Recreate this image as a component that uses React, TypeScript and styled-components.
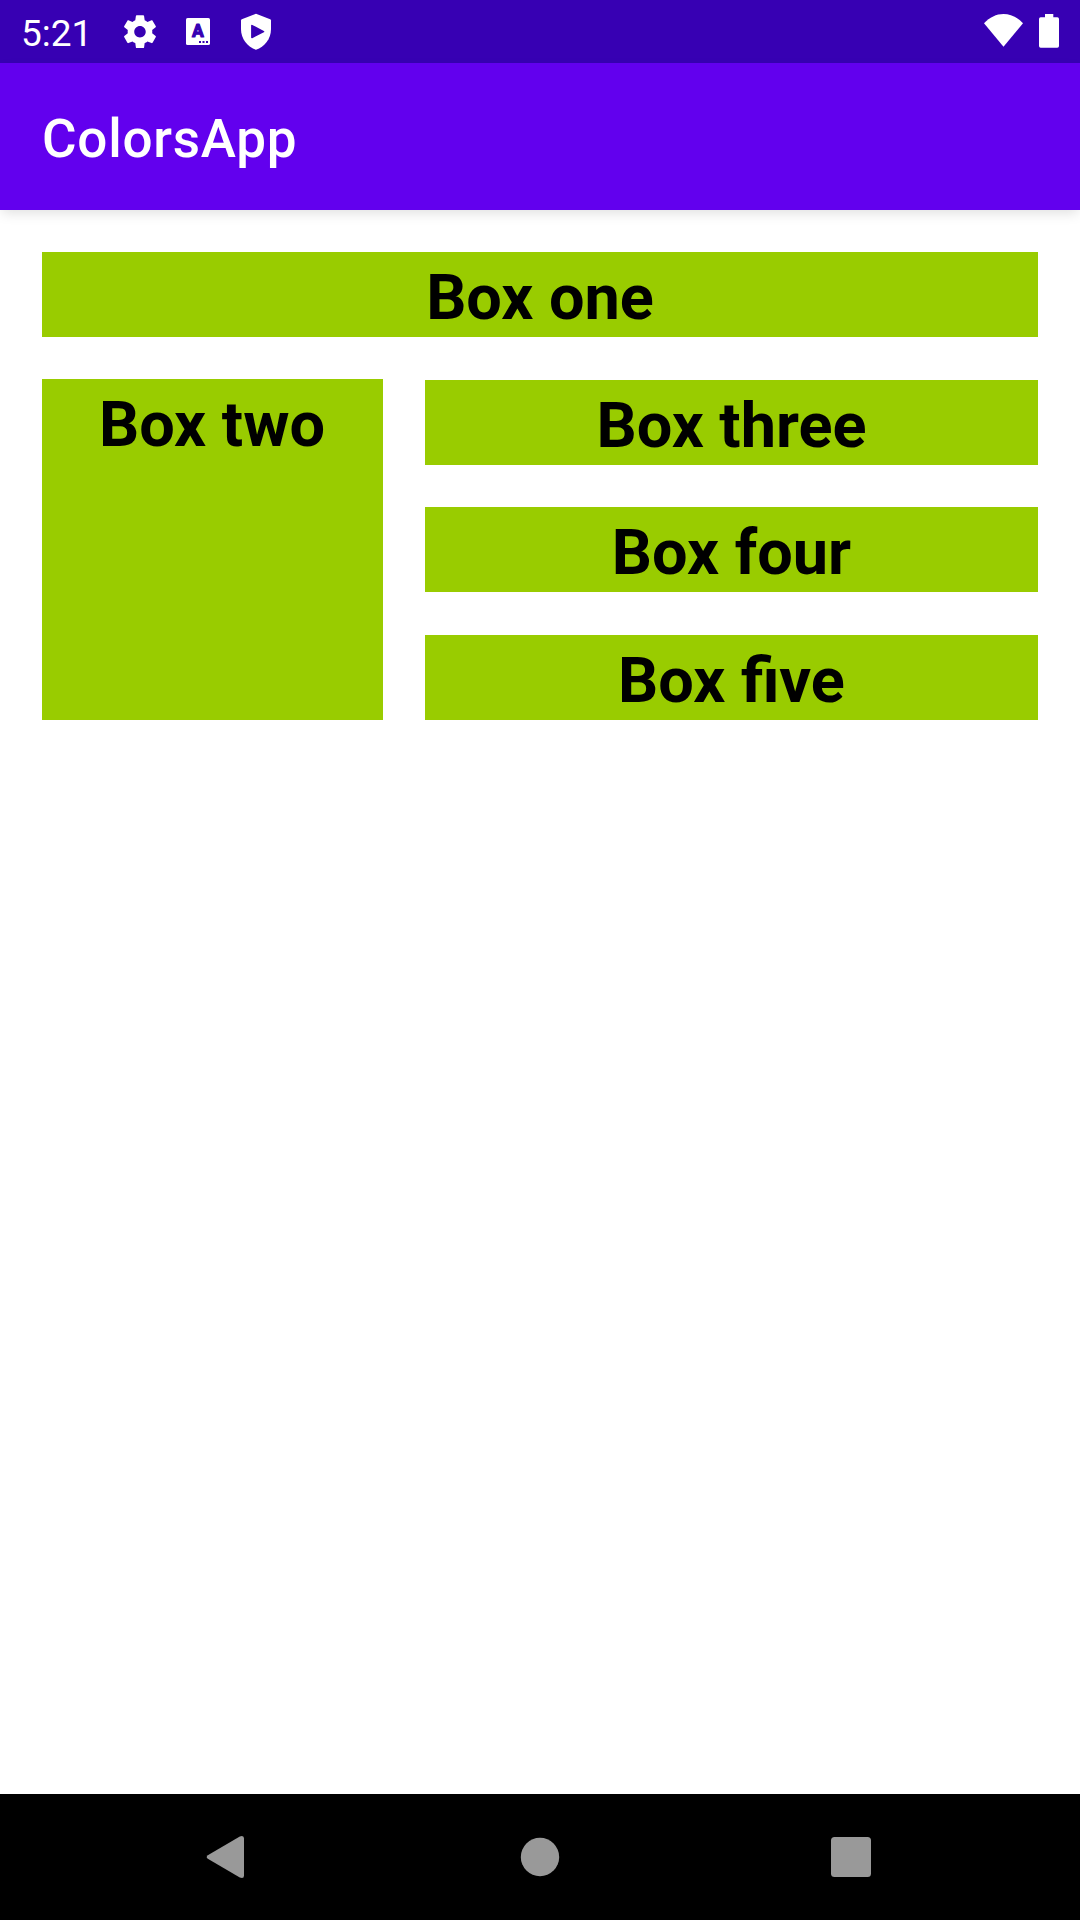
import React from 'react';
import styled, { createGlobalStyle } from 'styled-components';

const GlobalStyle = createGlobalStyle`
  *, *::before, *::after { box-sizing: border-box; }
  body { margin: 0; background: #fff; }
`;

const Screen = styled.div`
  width: 1080px;
  height: 1920px;
  display: flex;
  flex-direction: column;
  overflow: hidden;
  background: #fff;
  font-family: Roboto, 'Noto Sans', sans-serif;
`;

const StatusBar = styled.header`
  flex: none;
  height: 63px;
  display: flex;
  justify-content: space-between;
  padding: 0 18px 0 21px;
  background: #3700b3;
  color: #fff;
`;

const StatusGroup = styled.div`
  display: flex;
  align-items: flex-start;
`;

const Clock = styled.span`
  width: 97px;
  padding-top: 2px;
  font-size: 37px;
  line-height: 63px;
  white-space: nowrap;
`;

const StatusIcon = styled.svg<{ $w: number }>`
  display: block;
  flex: none;
  width: ${(p) => p.$w}px;
  height: 63px;
`;

const AppBar = styled.div`
  flex: none;
  height: 147px;
  padding: 4px 42px 0;
  display: flex;
  align-items: center;
  background: #6200ee;
  box-shadow: 0 5px 12px -2px rgba(0, 0, 0, 0.13);
`;

const Title = styled.h1`
  margin: 0;
  color: #fff;
  font-size: 53px;
  font-weight: 500;
  letter-spacing: 0.75px;
  line-height: 70px;
`;

const Content = styled.main`
  flex: 1;
  display: flex;
  flex-direction: column;
  gap: 42px;
  padding: 42px;
`;

const Row = styled.div`
  display: grid;
  grid-template-columns: 341px 613px;
  column-gap: 42px;
  height: 341px;
`;

const Stack = styled.div`
  display: flex;
  flex-direction: column;
  gap: 42px;
  padding-top: 1px;
`;

const Box = styled.div<{ $fill?: boolean }>`
  height: ${(p) => (p.$fill ? '100%' : '85px')};
  padding-top: 6px;
  padding-right: ${(p) => (p.$fill ? '1px' : '0')};
  background: #99cc00;
  color: #000;
  font-size: 63px;
  font-weight: 700;
  line-height: 79px;
  text-align: center;

  ${Stack} > &:last-child {
    margin-top: 1px;
  }
`;

const NavBar = styled.nav`
  flex: none;
  height: 126px;
  display: flex;
  align-items: center;
  justify-content: space-between;
  padding: 0 208px 0 205px;
  background: #000;
`;

const NavIcon = styled.svg`
  display: block;
  width: 42px;
  height: 44px;
  fill: #999;
`;

export default function App() {
  return (
    <>
      <GlobalStyle />
      <Screen>
        <StatusBar>
          <StatusGroup>
            <Clock>5:21</Clock>
            <StatusIcon $w={58} viewBox="118 0 58 63" fill="#fff">
              <path
                transform="translate(120.3 12) scale(1.64)"
                d="M19.43 12.98c.04-.32.07-.64.07-.98s-.03-.66-.07-.98l2.11-1.65c.19-.15.24-.42.12-.64l-2-3.46c-.12-.22-.39-.3-.61-.22l-2.49 1c-.52-.4-1.08-.73-1.69-.98l-.38-2.65C14.46 2.18 14.25 2 14 2h-4c-.25 0-.46.18-.49.42l-.38 2.65c-.61.25-1.17.59-1.69.98l-2.49-1c-.23-.09-.49 0-.61.22l-2 3.46c-.13.22-.07.49.12.64l2.11 1.65c-.04.32-.07.65-.07.98s.03.66.07.98l-2.11 1.65c-.19.15-.24.42-.12.64l2 3.46c.12.22.39.3.61.22l2.49-1c.52.4 1.08.73 1.69.98l.38 2.65c.03.24.24.42.49.42h4c.25 0 .46-.18.49-.42l.38-2.65c.61-.25 1.17-.59 1.69-.98l2.49 1c.23.09.49 0 .61-.22l2-3.46c.12-.22.07-.49-.12-.64l-2.11-1.65zM12 15.5c-1.93 0-3.5-1.57-3.5-3.5s1.57-3.5 3.5-3.5 3.5 1.57 3.5 3.5-1.57 3.5-3.5 3.5z"
              />
            </StatusIcon>
            <StatusIcon $w={58} viewBox="176 0 58 63">
              <rect x="186" y="18" width="24" height="27" rx="1.6" fill="#fff" />
              <text
                x="198"
                y="37.3"
                textAnchor="middle"
                fontFamily="Roboto, sans-serif"
                fontWeight="700"
                fontSize="17.5"
                fill="#3700b3"
                stroke="#3700b3"
                strokeWidth="1.1"
                strokeLinejoin="round"
              >
                A
              </text>
              <g fill="#3700b3">
                <rect x="199" y="41" width="2" height="2" />
                <rect x="202.5" y="41" width="2" height="2" />
                <rect x="206" y="41" width="2" height="2" />
              </g>
            </StatusIcon>
            <StatusIcon $w={48} viewBox="234 0 48 63">
              <path
                fill="#fff"
                d="M256 13.7 L270.2 19.2 Q271 19.6 271 20.5 V29 C271 39 264.5 47 256 49.8 C247.5 47 241 39 241 29 V20.5 Q241 19.6 241.8 19.2 Z"
              />
              <path
                fill="#3700b3"
                stroke="#3700b3"
                strokeWidth="1.6"
                strokeLinejoin="round"
                d="M251.9 25.6 L263.5 31.6 L251.9 37.5 Z"
              />
            </StatusIcon>
          </StatusGroup>
          <StatusGroup>
            <StatusIcon $w={82} viewBox="980 0 82 63" fill="#fff">
              <path d="M1003.5 46.8 L984 23.3 C989.5 17.3 996.5 14 1003.5 14 C1010.5 14 1017.5 17.3 1023 23.3 Z" />
              <path d="M1045 14 H1053.3 V17.3 H1057.3 Q1059 17.3 1059 19 V46 Q1059 47.8 1057.3 47.8 H1040.7 Q1039 47.8 1039 46 V19 Q1039 17.3 1040.7 17.3 H1045 Z" />
            </StatusIcon>
          </StatusGroup>
        </StatusBar>
        <AppBar>
          <Title>ColorsApp</Title>
        </AppBar>
        <Content>
          <Box>Box one</Box>
          <Row>
            <Box $fill>Box two</Box>
            <Stack>
              <Box>Box three</Box>
              <Box>Box four</Box>
              <Box>Box five</Box>
            </Stack>
          </Row>
        </Content>
        <NavBar>
          <NavIcon viewBox="205 1835 42 44">
            <path d="M207.8 1855.2 L239.8 1836.4 Q244 1834.8 244 1838.5 V1875.5 Q244 1879.2 239.8 1877.6 L207.8 1858.8 Q205.6 1857 207.8 1855.2 Z" />
          </NavIcon>
          <NavIcon viewBox="518 1835 42 44">
            <circle cx="540" cy="1857" r="19.2" />
          </NavIcon>
          <NavIcon viewBox="830 1835 42 44">
            <rect x="831" y="1837" width="40" height="40" rx="3.5" />
          </NavIcon>
        </NavBar>
      </Screen>
    </>
  );
}
